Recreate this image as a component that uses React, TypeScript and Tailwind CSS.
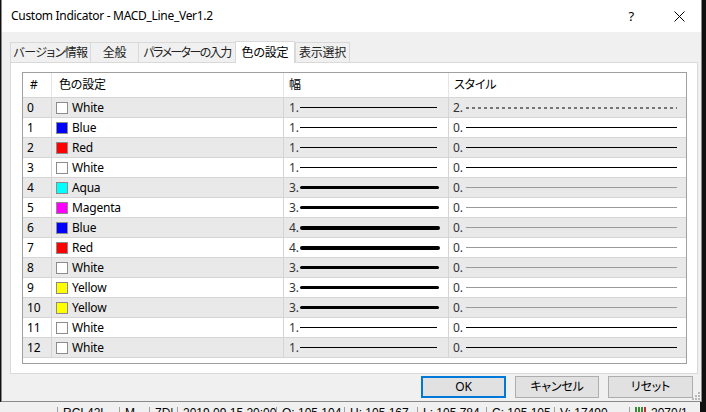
import React from 'react';

type Row = { name: string; color: string; width: number; style: number };

const rows: Row[] = [
  { name: 'White', color: '#ffffff', width: 1, style: 2 },
  { name: 'Blue', color: '#0000ff', width: 1, style: 0 },
  { name: 'Red', color: '#ff0000', width: 1, style: 0 },
  { name: 'White', color: '#ffffff', width: 1, style: 0 },
  { name: 'Aqua', color: '#00ffff', width: 3, style: 0 },
  { name: 'Magenta', color: '#ff00ff', width: 3, style: 0 },
  { name: 'Blue', color: '#0000ff', width: 4, style: 0 },
  { name: 'Red', color: '#ff0000', width: 4, style: 0 },
  { name: 'White', color: '#ffffff', width: 3, style: 0 },
  { name: 'Yellow', color: '#ffff00', width: 3, style: 0 },
  { name: 'Yellow', color: '#ffff00', width: 3, style: 0 },
  { name: 'White', color: '#ffffff', width: 1, style: 0 },
  { name: 'White', color: '#ffffff', width: 1, style: 0 },
];

const tabs = [
  { label: 'バージョン情報', w: 'w-[80px] tracking-[-0.6px]' },
  { label: '全般', w: 'w-[48px]' },
  { label: 'パラメーターの入力', w: 'w-[97px] tracking-[-1.6px]' },
  { label: '色の設定', w: 'w-[60px]', active: true },
  { label: '表示選択', w: 'w-[55px]' },
];

const thick: Record<number, string> = {
  1: 'h-px w-[137px]',
  3: 'h-[3px] w-[139px] rounded-full',
  4: 'h-[4px] w-[140px] rounded-full',
};

function WidthLine({ width }: { width: number }) {
  return <div className={`bg-black ${thick[width]}`} />;
}

function StyleLine({ style, width }: { style: number; width: number }) {
  if (style === 2) {
    return (
      <svg width="211" height="2" className="block">
        <line x1="0" y1="1" x2="211" y2="1" stroke="#000" strokeWidth="1" strokeDasharray="3 3" />
      </svg>
    );
  }
  return <div className={`h-px w-[211px] ${width > 1 ? 'bg-[#9a9a9a]' : 'bg-black'}`} />;
}

function CloseIcon() {
  return (
    <svg width="11" height="11" viewBox="0 0 11 11">
      <path d="M0.5 0.5 L10.5 10.5 M10.5 0.5 L0.5 10.5" stroke="#000" strokeWidth="1" fill="none" />
    </svg>
  );
}

const statusCells = [
  { t: '', w: 'w-[57px]' },
  { t: 'RCI 42L', w: 'w-[62px]' },
  { t: 'M', w: 'w-[30px]' },
  { t: '7D|', w: 'w-[28px]' },
  { t: '2019.09.15 20:00', w: 'w-[99px]' },
  { t: 'O: 105.104', w: 'w-[68px]' },
  { t: 'H: 105.167', w: 'w-[73px]' },
  { t: 'L: 105.784', w: 'w-[69px]' },
  { t: 'C: 105.105', w: 'w-[68px]' },
  { t: 'V: 17490', w: 'w-[75px]' },
];

export default function App() {
  return (
    <div className="w-[706px] h-[412px] bg-[#101010] overflow-hidden flex flex-col text-[12px] tracking-[-0.2px] text-black font-['Noto_Sans','Noto_Sans_CJK_JP',sans-serif] [font-feature-settings:'palt']">
      {/* dialog */}
      <div className="w-[701px] h-[402px] ml-px shrink-0 bg-[#f0f0f0] border-x border-b border-[#8a8a8a] flex flex-col relative">
        {/* title bar */}
        <div className="h-[32px] bg-white flex items-center pl-[9px] shrink-0 whitespace-nowrap">
          <span className="leading-none tracking-[-0.3px]">Custom Indicator - MACD_Line_Ver1.2</span>
          <span className="ml-auto text-[13px] leading-none mr-[40px]">?</span>
          <span className="mr-[16px] flex items-center"><CloseIcon /></span>
        </div>

        {/* tabs */}
        <div className="h-[30px] flex items-end pl-[8px] shrink-0 whitespace-nowrap">
          {tabs.map((t) =>
            t.active ? (
              <div
                key={t.label}
                className={`${t.w} h-[22px] bg-white border-x border-t border-[#d9d9d9] -mb-px relative z-10 flex items-center justify-center leading-none`}
              >
                {t.label}
              </div>
            ) : (
              <div
                key={t.label}
                className={`${t.w} h-[20px] border-t border-l border-[#d9d9d9] last:border-r flex items-center justify-center leading-none text-[#222]`}
              >
                {t.label}
              </div>
            )
          )}
        </div>

        {/* panel */}
        <div className="w-[688px] h-[312px] ml-[8px] bg-white border border-[#d9d9d9] pt-[9px] pl-[11px] shrink-0">
          <div className="w-[665px] h-[292px] border border-[#a0a0a0] flex flex-col">
            {/* header */}
            <div className="grid grid-cols-[29px_232px_165px_1fr] h-[25px] border-b border-[#d5d5d5] shrink-0">
              <div className="pl-[7px] flex items-center border-r border-[#e5e5e5]">#</div>
              <div className="pl-[7px] flex items-center border-r border-[#e5e5e5]">色の設定</div>
              <div className="pl-[5px] flex items-center border-r border-[#e5e5e5]">幅</div>
              <div className="pl-[5px] flex items-center">スタイル</div>
            </div>
            {rows.map((r, i) => (
              <div
                key={i}
                className={`grid grid-cols-[29px_232px_165px_1fr] h-[20px] border-b border-[#d5d5d5] shrink-0 ${i % 2 === 0 ? 'bg-[#e9e9e9]' : 'bg-white'}`}
              >
                <div className="pl-[4px] flex items-center border-r border-[#d5d5d5]">{i}</div>
                <div className="pl-[4px] flex items-center border-r border-[#d5d5d5]">
                  <div className="w-[12px] h-[12px] border border-[#8c8c8c] mr-[4px]" style={{ backgroundColor: r.color }} />
                  <span>{r.name}</span>
                </div>
                <div className="pl-[5px] flex items-center border-r border-[#d5d5d5]">
                  <span className="w-[11px] text-[#333]">{r.width}.</span>
                  <WidthLine width={r.width} />
                </div>
                <div className="pl-[4px] flex items-center">
                  <span className="w-[13px] text-[#333]">{r.style}.</span>
                  <StyleLine style={r.style} width={r.width} />
                </div>
              </div>
            ))}
          </div>
        </div>

        {/* buttons */}
        <div className="flex justify-end gap-[9px] pr-[8px] mt-[2px] shrink-0">
          <button className="w-[85px] h-[22px] bg-[#e1e1e1] border-2 border-[#0078d7] leading-none">OK</button>
          <button className="w-[84px] h-[22px] bg-[#e1e1e1] border border-[#adadad] leading-none">キャンセル</button>
          <button className="w-[85px] h-[22px] bg-[#e1e1e1] border border-[#adadad] leading-none">リセット</button>
        </div>

        {/* resize grip */}
        <div className="absolute right-[1px] bottom-[1px] grid grid-cols-3 gap-px">
          <span className="w-[2px] h-[2px]" />
          <span className="w-[2px] h-[2px]" />
          <span className="w-[2px] h-[2px] bg-[#b8b8b8]" />
          <span className="w-[2px] h-[2px]" />
          <span className="w-[2px] h-[2px] bg-[#b8b8b8]" />
          <span className="w-[2px] h-[2px] bg-[#b8b8b8]" />
          <span className="w-[2px] h-[2px] bg-[#b8b8b8]" />
          <span className="w-[2px] h-[2px] bg-[#b8b8b8]" />
          <span className="w-[2px] h-[2px] bg-[#b8b8b8]" />
        </div>
      </div>

      {/* terminal status bar behind the dialog */}
      <div className="flex-1 w-[700px] bg-[#f0f0f0] flex pt-[5px] font-['Liberation_Sans',sans-serif] text-[12px] tracking-normal leading-none whitespace-nowrap">
        {statusCells.map((c, i) => (
          <div key={i} className={`${c.w} shrink-0 pl-[5px] ${i > 0 ? 'border-l border-[#a0a0a0]' : ''}`}>
            {c.t}
          </div>
        ))}
        <div className="pl-[5px] border-l border-[#a0a0a0] flex gap-px items-start">
          <span className="w-[2px] h-[8px] bg-[#3a8a3a]" />
          <span className="w-[2px] h-[8px] bg-[#3a8a3a]" />
          <span className="w-[2px] h-[8px] bg-[#3a8a3a]" />
          <span className="w-[2px] h-[8px] bg-[#c03030] mr-[4px]" />
          <span>2070/1</span>
        </div>
      </div>
    </div>
  );
}
